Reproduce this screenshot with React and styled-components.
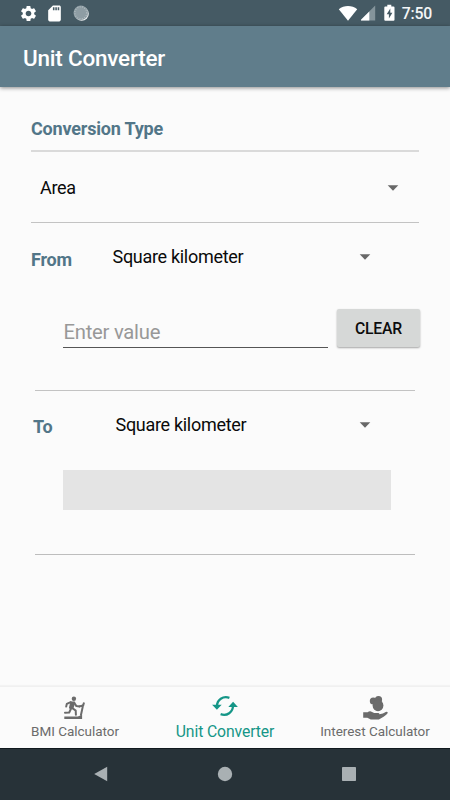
import styled, { createGlobalStyle } from 'styled-components'
import { MdSettings, MdSdCard } from 'react-icons/md'

const GlobalStyle = createGlobalStyle`
	* {
		box-sizing: border-box;
	}
	body {
		margin: 0;
		font-family: Roboto, 'Liberation Sans', sans-serif;
		background: #fbfbfb;
	}
`

const Screen = styled.div`
	width: 450px;
	height: 800px;
	display: flex;
	flex-direction: column;
	overflow: hidden;
	background: #fbfbfb;
`

const StatusBar = styled.header`
	height: 26px;
	flex: none;
	display: flex;
	align-items: center;
	padding: 0 18px 0 19px;
	background: #455a64;
	color: #fff;
	svg {
		display: block;
		flex: none;
	}
`

const StatusGroup = styled.div`
	display: flex;
	align-items: center;
	gap: ${(props) => props.$gap}px;
	margin-left: ${(props) => (props.$end ? 'auto' : 0)};
`

const Clock = styled.span`
	margin-left: 1px;
	padding-top: 2px;
	font-size: 15.8px;
	line-height: 20px;
	font-weight: 500;
	letter-spacing: -0.2px;
	color: #f4f6f7;
`

const AppBar = styled.div`
	height: 61px;
	flex: none;
	display: flex;
	align-items: center;
	padding: 3px 23px 0;
	background: #607d8b;
	box-shadow: 0 1px 4px rgba(0, 0, 0, 0.45);
`

const Title = styled.h1`
	margin: 0;
	font-size: 22.5px;
	line-height: 28px;
	font-weight: 500;
	letter-spacing: -0.22px;
	color: #fff;
`

const Content = styled.main`
	flex: 1;
	display: flex;
	flex-direction: column;
	padding: 0 31px;
`

const Divider = styled.hr`
	width: auto;
	height: ${(props) => props.$size || 1}px;
	flex: none;
	margin: 0 ${(props) => props.$inset || 0}px;
	border: 0;
	background: ${(props) => props.$color || '#c3c3c3'};
`

const Row = styled.div`
	height: ${(props) => props.$height}px;
	flex: none;
	display: flex;
	align-items: flex-start;
	padding: ${(props) => props.$pad};
`

const Label = styled.h2`
	width: ${(props) => (props.$width ? `${props.$width}px` : 'auto')};
	margin: ${(props) => props.$top || 0}px 0 0;
	font-size: 18px;
	line-height: 22px;
	font-weight: 700;
	letter-spacing: -0.2px;
	color: #527688;
`

const Spinner = styled.button`
	flex: 1;
	display: flex;
	align-items: center;
	justify-content: space-between;
	height: 22px;
	padding: 0;
	border: 0;
	background: none;
	font: 400 18px/22px Roboto, 'Liberation Sans', sans-serif;
	letter-spacing: -0.3px;
	color: #0a0a0a;
	svg {
		display: block;
	}
`

const ValueInput = styled.input`
	width: 265px;
	height: 34px;
	flex: none;
	padding: 3px 0 0 0.5px;
	border: 0;
	border-bottom: 1px solid #555;
	border-radius: 0;
	outline: 0;
	background: none;
	font: 400 20.25px/26px Roboto, 'Liberation Sans', sans-serif;
	letter-spacing: -0.25px;
	&::placeholder {
		color: #989898;
		opacity: 1;
	}
`

const ClearButton = styled.button`
	width: 83px;
	height: 38px;
	flex: none;
	margin: -5px 0 0 9px;
	padding: 1px 0 0;
	border: 0;
	border-radius: 2px;
	background: #d6d8d7;
	box-shadow: 0 1px 2px rgba(0, 0, 0, 0.35);
	font: 500 15.75px/20px Roboto, 'Liberation Sans', sans-serif;
	letter-spacing: -0.2px;
	color: #0c0c0c;
`

const Result = styled.output`
	width: 328px;
	height: 40px;
	background: #e4e4e4;
`

const BottomNav = styled.nav`
	height: 62px;
	flex: none;
	display: grid;
	grid-template-columns: repeat(3, 150px);
	border-top: 1px solid #f0f0f0;
	box-shadow: 0 -1px 1px rgba(0, 0, 0, 0.03);
`

const NavItem = styled.a`
	display: flex;
	flex-direction: column;
	align-items: center;
	padding-top: ${(props) => (props.$active ? 7 : 9)}px;
	font-size: ${(props) => (props.$active ? 15.75 : 13.5)}px;
	line-height: 20px;
	letter-spacing: ${(props) => (props.$active ? '-0.12px' : '-0.03px')};
	white-space: nowrap;
	color: ${(props) => (props.$active ? '#159687' : '#6b6b6b')};
	svg {
		display: block;
		margin-bottom: ${(props) => (props.$active ? 4 : 1)}px;
	}
`

const SystemBar = styled.footer`
	height: 52px;
	flex: none;
	display: grid;
	grid-template-columns: repeat(3, 124px);
	justify-content: center;
	align-items: center;
	justify-items: center;
	padding-bottom: 2px;
	border-top: 1px solid #10191e;
	background: #273238;
	svg {
		display: block;
	}
`

const SyncDot = () => (
	<svg width='19' height='17' viewBox='-2 0 19 17'>
		<circle cx='8.7' cy='8.7' r='7.1' fill='#eef1f2' />
		<circle cx='7.8' cy='7.8' r='7.3' fill='#8e9da4' />
		<circle
			cx='7.8'
			cy='7.8'
			r='6'
			fill='none'
			stroke='#b4bfc3'
			strokeWidth='1.2'
			strokeDasharray='.9 1.5'
		/>
	</svg>
)

const Wifi = () => (
	<svg width='20' height='17' viewBox='0 0 20 17'>
		<path d='M.8 4.2C6-.1 14-.1 19.2 4.2L10 15.7z' fill='#fff' />
	</svg>
)

const Signal = () => (
	<svg width='16' height='16' viewBox='1 0 16 16'>
		<path d='M15.2.5v15H.2z' fill='#84949b' />
		<path d='M9.3 6.4v9.1H.2z' fill='#fff' />
	</svg>
)

const Battery = () => (
	<svg width='18' height='18' viewBox='-4 0 18 18'>
		<path
			d='M3.3.8h4v1.7h2.2q1 0 1 1v12.2q0 1-1 1H1.3q-1 0-1-1V3.5q0-1 1-1h2z'
			fill='#fff'
		/>
		<path d='M6.3 4.6L2.7 10.3h2.2v4.2l3.5-5.8H6.3z' fill='#455a64' />
	</svg>
)

const Arrow = () => (
	<svg width='12' height='6' viewBox='0 0 12 6'>
		<path d='M.7.3h10.6L6 5.7z' fill='#686868' />
	</svg>
)

const Treadmill = () => (
	<svg width='24' height='24' viewBox='0 0 24 24' fill='none' stroke='#6b6b6b'>
		<circle cx='10.9' cy='2.8' r='2.2' fill='#6b6b6b' stroke='none' />
		<path
			d='M8.2 6.4l3 .2-1.8 5.6-2.4-.4z'
			fill='#6b6b6b'
			strokeWidth='2'
			strokeLinejoin='round'
		/>
		<path
			d='M7.7 6.1L3.8 7.9 3.2 10.6M11.2 6.7l2.2 3.4 3 .3M9.3 12l3.4 2.6.2 4.2M8.2 12.3l-2 4.2-4.2.3'
			strokeWidth='2'
			strokeLinecap='round'
			strokeLinejoin='round'
		/>
		<path d='M16 10.4l4.2-.9.8-3M20.2 8.6l-2.4 11.2' strokeWidth='2' />
		<path d='M1.3 20.4h13.4l4.4-1.3v4H1.3z' fill='#6b6b6b' stroke='none' />
	</svg>
)

const Cycle = () => (
	<svg width='26' height='24' viewBox='0 0 26 24' fill='none' stroke='#159687'>
		<path
			d='M5 12.2C5 5.8 11 1.5 17.4 3.8M21 11.5C21 18.2 15 22.5 8.6 20.2'
			strokeWidth='2.3'
		/>
		<path
			d='M.1 10.8h9.6l-4.8 5zM16.3 12.9h9.6l-4.8-5.2z'
			fill='#159687'
			stroke='none'
		/>
	</svg>
)

const HandCoins = () => (
	<svg width='26' height='24' viewBox='0 0 26 24' fill='#6b6b6b'>
		<circle cx='11.3' cy='5' r='3.5' />
		<circle cx='16.5' cy='3.7' r='3.6' />
		<ellipse cx='16' cy='9.5' rx='5.4' ry='5.8' />
		<path d='M1.2 16.2h4.4q2.2-1.5 4.4-.3l2.2 1.1h4.2q1.3.2 1 1.3 3.8-.4 6.3-2.4 1.7-.7 2.1.8-.5 1.4-4.2 4.1l-4.7 2.6H8.8l-3.5-1.6H1.2z' />
	</svg>
)

const tabs = [
	//name, icon, active
	['BMI Calculator', Treadmill, false],
	['Unit Converter', Cycle, true],
	['Interest Calculator', HandCoins, false],
]

const App = () => (
	<>
		<GlobalStyle />
		<Screen>
			<StatusBar>
				<StatusGroup $gap={7}>
					<MdSettings size={19} />
					<MdSdCard size={19} />
					<SyncDot />
				</StatusGroup>
				<StatusGroup $gap={3} $end>
					<Wifi />
					<Signal />
					<Battery />
					<Clock>7:50</Clock>
				</StatusGroup>
			</StatusBar>
			<AppBar>
				<Title>Unit Converter</Title>
			</AppBar>
			<Content>
				<Row $height={63} $pad='31px 0 0'>
					<Label>Conversion Type</Label>
				</Row>
				<Divider $size={2} $color='#dadada' />
				<Row $height={70} $pad='25px 20px 0 9px'>
					<Spinner>
						Area
						<Arrow />
					</Spinner>
				</Row>
				<Divider />
				<Row $height={86} $pad='23px 48px 0 0'>
					<Label $top={3} $width={81.5}>
						From
					</Label>
					<Spinner>
						Square kilometer
						<Arrow />
					</Spinner>
				</Row>
				<Row $height={81} $pad='5px 0 0 32px'>
					<ValueInput placeholder='Enter value' />
					<ClearButton>CLEAR</ClearButton>
				</Row>
				<Divider $inset={4} />
				<Row $height={79} $pad='23px 48px 0 2px'>
					<Label $top={2} $width={82.5}>
						To
					</Label>
					<Spinner>
						Square kilometer
						<Arrow />
					</Spinner>
				</Row>
				<Row $height={84} $pad='0 0 0 32px'>
					<Result />
				</Row>
				<Divider $inset={4} $color='#bdbdbd' />
			</Content>
			<BottomNav>
				{tabs.map(([name, Icon, active]) => (
					<NavItem key={name} $active={active}>
						<Icon />
						{name}
					</NavItem>
				))}
			</BottomNav>
			<SystemBar>
				<svg width='16' height='16' viewBox='0 0 16 16'>
					<path d='M14.2.7v14.6L1.2 8z' fill='#a9b0b3' />
				</svg>
				<svg width='16' height='16' viewBox='0 0 16 16'>
					<circle cx='8' cy='8' r='7.2' fill='#a9b0b3' />
				</svg>
				<svg width='16' height='16' viewBox='0 0 16 16'>
					<rect x='1' y='1' width='14' height='14' rx='.7' fill='#a9b0b3' />
				</svg>
			</SystemBar>
		</Screen>
	</>
)

export default App
